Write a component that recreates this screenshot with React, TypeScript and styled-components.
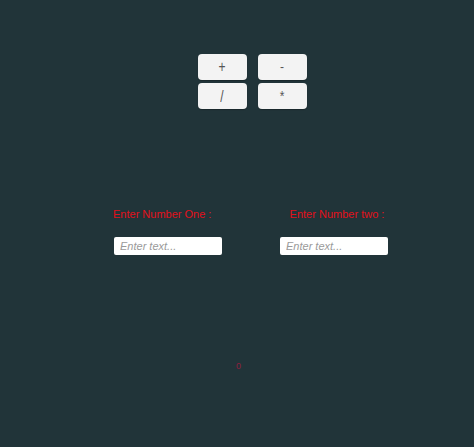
import React from "react";
import styled, { createGlobalStyle } from "styled-components";

const GlobalStyle = createGlobalStyle`
  html, body {
    margin: 0;
    padding: 0;
    background: #213439;
  }
  body {
    font-family: "Liberation Sans", Arial, sans-serif;
  }
`;

const Page = styled.div`
  width: 474px;
  height: 447px;
  background: #213439;
  display: flex;
  flex-direction: column;
  align-items: center;
  padding-top: 54px;
  box-sizing: border-box;
`;

const Pad = styled.div`
  display: grid;
  grid-template-columns: 49px 49px;
  grid-auto-rows: 26px;
  column-gap: 11px;
  row-gap: 3px;
  margin-left: 30px;
`;

const OpButton = styled.button`
  border: none;
  border-radius: 4px;
  background: #f3f3f3;
  color: #555555;
  font-family: "Liberation Sans", Arial, sans-serif;
  font-size: 12px;
  padding: 0;
  display: flex;
  align-items: center;
  justify-content: center;
  box-shadow: 0 1px 1px rgba(0, 0, 0, 0.25);
`;

const Glyph = styled.span<{ $stretch: number }>`
  display: inline-block;
  color: #555555;
  transform: scaleY(${(p) => p.$stretch});
`;

const Fields = styled.div`
  display: flex;
  width: 100%;
  margin-top: 98px;
`;

const Field = styled.div<{ $align: "flex-start" | "center"; $left: number }>`
  width: 108px;
  margin-left: ${(p) => p.$left}px;
  display: flex;
  flex-direction: column;
  align-items: ${(p) => p.$align};
  gap: 16px;
`;

const Label = styled.div<{ $shift: number }>`
  color: #e3101b;
  font-size: 11px;
  line-height: 14px;
  white-space: nowrap;
  margin-left: ${(p) => p.$shift}px;
`;

const Input = styled.input`
  width: 108px;
  height: 18px;
  box-sizing: border-box;
  border: none;
  border-radius: 2px;
  background: #fff;
  padding: 0 6px;
  font-family: "Liberation Sans", Arial, sans-serif;
  font-size: 11px;
  outline: none;
  &::placeholder {
    color: #9a9a9a;
    font-style: italic;
  }
`;

const Result = styled.div`
  margin-top: 106px;
  color: #8e1f3f;
  font-size: 9px;
  line-height: 10px;
  margin-left: 3px;
`;

const ops = [
  { sym: "+", stretch: 1.3 },
  { sym: "-", stretch: 1 },
  { sym: "/", stretch: 1.4 },
  { sym: "*", stretch: 1.2 },
];

export default function App() {
  return (
    <>
      <GlobalStyle />
      <Page>
        <Pad>
          {ops.map((o) => (
            <OpButton key={o.sym}>
              <Glyph $stretch={o.stretch}>{o.sym}</Glyph>
            </OpButton>
          ))}
        </Pad>
        <Fields>
          <Field $align="flex-start" $left={114}>
            <Label $shift={-1}>Enter Number One :</Label>
            <Input placeholder="Enter text..." />
          </Field>
          <Field $align="center" $left={58}>
            <Label $shift={6}>Enter Number two :</Label>
            <Input placeholder="Enter text..." />
          </Field>
        </Fields>
        <Result>0</Result>
      </Page>
    </>
  );
}
